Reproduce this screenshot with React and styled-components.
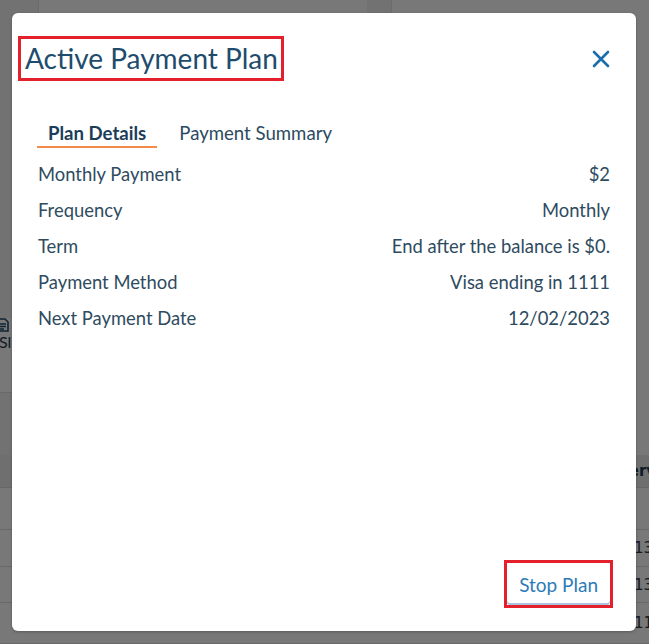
import React, { useState } from "react";
import styled, { createGlobalStyle } from "styled-components";

const rows = [
  { label: "Monthly Payment", value: "$2" },
  { label: "Frequency", value: "Monthly" },
  { label: "Term", value: "End after the balance is $0." },
  { label: "Payment Method", value: "Visa ending in 1111" },
  { label: "Next Payment Date", value: "12/02/2023" },
];

const tableRows = [
  { h: 42, text: "" },
  { h: 37, text: "13" },
  { h: 36, text: "13" },
  { h: 41, text: "11" },
];

function App() {
  const [tab, setTab] = useState("details");

  return (
    <Page>
      <GlobalStyle />
      <Backdrop>
        <TopArea>
          <SideCard>
            <CardTop />
            <InfoRow>
              <DocIcon viewBox="0 0 12 14">
                <path d="M1 1h7l3 3v9H1z M3 6h6 M3 8.5h6 M3 11h4" fill="none" stroke="#1d4d72" strokeWidth="1.6" />
              </DocIcon>
              <InfoText>Slip</InfoText>
            </InfoRow>
          </SideCard>
          <Gutter />
          <MainCard />
        </TopArea>
        <Table>
          <TableHead>
            <span />
            <span />
            <span />
            <HeadCell>Service</HeadCell>
          </TableHead>
          {tableRows.map((r, i) => (
            <TableRow key={i} $h={r.h}>
              <span />
              <span />
              <span />
              <Cell>{r.text}</Cell>
            </TableRow>
          ))}
        </Table>
      </Backdrop>

      <Overlay>
        <Modal role="dialog" aria-labelledby="plan-title">
          <Header>
            <Title id="plan-title">Active Payment Plan</Title>
            <CloseButton aria-label="Close">
              <svg width="18" height="18" viewBox="0 0 18 18">
                <path d="M2 2L16 16M16 2L2 16" stroke="#1b6ea9" strokeWidth="2.6" strokeLinecap="round" />
              </svg>
            </CloseButton>
          </Header>

          <Tabs>
            <Tab $active={tab === "details"} onClick={() => setTab("details")}>
              Plan Details
            </Tab>
            <Tab $active={tab === "summary"} onClick={() => setTab("summary")}>
              Payment Summary
            </Tab>
          </Tabs>

          <Details>
            {rows.map((r) => (
              <DetailRow key={r.label}>
                <span>{r.label}</span>
                <span>{r.value}</span>
              </DetailRow>
            ))}
          </Details>

          <Footer>
            <Highlight>
              <StopButton>Stop Plan</StopButton>
            </Highlight>
          </Footer>
        </Modal>
      </Overlay>
    </Page>
  );
}

export default App;

const GlobalStyle = createGlobalStyle`
  html, body {
    margin: 0;
    padding: 0;
    overflow: hidden;
  }
  body {
    font-family: "Lato", "Noto Sans", sans-serif;
  }
`;

const Page = styled.div`
  position: relative;
  width: 649px;
  height: 644px;
  overflow: hidden;
  background: #f2f2f2;
`;

const Backdrop = styled.div`
  display: flex;
  flex-direction: column;
  height: 100%;
`;

const TopArea = styled.div`
  display: flex;
  height: 455px;
`;

const SideCard = styled.div`
  width: 328px;
  background: #fff;
  border-left: 1px solid #e4e4e4;
  margin-left: 38px;
  display: flex;
  flex-direction: column;
  border-bottom: 1px solid #e0e0e0;
`;

const CardTop = styled.div`
  height: 318px;
`;

const InfoRow = styled.div`
  display: flex;
  flex-direction: column;
  margin-left: -40px;
  height: 74px;
  border-bottom: 1px solid #e0e0e0;
  background: #fff;
`;

const DocIcon = styled.svg`
  width: 12px;
  height: 14px;
  margin-left: -2px;
`;

const InfoText = styled.span`
  font-size: 16px;
  color: #2a3c4c;
`;

const Gutter = styled.div`
  width: 24px;
  border-right: 1px solid #e6e6e6;
`;

const MainCard = styled.div`
  flex: 1;
  background: #fff;
`;

const Table = styled.div`
  display: flex;
  flex-direction: column;
  background: #fff;
  flex: 1;
`;

const TableHead = styled.div`
  display: grid;
  grid-template-columns: 40px 288px 290px 1fr;
  height: 32px;
  align-items: center;
  background: #ececec;
  border-bottom: 1px solid #dcdcdc;
  overflow: hidden;
`;

const HeadCell = styled.span`
  font-family: "DejaVu Sans", sans-serif;
  font-weight: 700;
  font-size: 15px;
  color: #1d3d58;
  white-space: nowrap;
`;

const TableRow = styled.div`
  display: grid;
  grid-template-columns: 40px 288px 306px 1fr;
  height: ${(p) => p.$h}px;
  align-items: center;
  border-bottom: 1px solid #dedede;
  box-sizing: border-box;
  overflow: hidden;
`;

const Cell = styled.span`
  font-family: "DejaVu Sans", sans-serif;
  font-size: 15px;
  color: #2a3a48;
  white-space: nowrap;
`;

const Overlay = styled.div`
  position: absolute;
  inset: 0;
  background: rgba(0, 0, 0, 0.53);
  display: flex;
  align-items: center;
  justify-content: center;
`;

const Modal = styled.div`
  width: 624px;
  height: 618px;
  background: #fff;
  border-radius: 6px;
  box-shadow: 0 1px 3px rgba(0, 0, 0, 0.25);
  display: flex;
  flex-direction: column;
  box-sizing: border-box;
  margin-left: -1px;
`;

const Header = styled.div`
  display: flex;
  align-items: center;
  justify-content: space-between;
  padding: 23px 26px 0 6px;
`;

const Title = styled.h2`
  margin: 0;
  border: 3px solid #e3202b;
  padding: 2px 3px 2px 4px;
  font-size: 28px;
  line-height: 35px;
  font-weight: 400;
  color: #1e4c6d;
`;

const CloseButton = styled.button`
  display: flex;
  padding: 0;
  border: 0;
  background: none;
  cursor: pointer;
`;

const Tabs = styled.div`
  display: flex;
  gap: 11px;
  padding: 0 25px;
  margin-top: 40px;
`;

const Tab = styled.button`
  padding: 0 11px 1px;
  border: 0;
  border-bottom: 2px solid ${(p) => (p.$active ? "#f28a4a" : "transparent")};
  background: none;
  font-family: inherit;
  font-size: 18.6px;
  line-height: 24px;
  font-weight: ${(p) => (p.$active ? 700 : 400)};
  color: ${(p) => (p.$active ? "#1b3d58" : "#2b4a61")};
  cursor: pointer;
`;

const Details = styled.div`
  display: flex;
  flex-direction: column;
  padding: 8px 26px 0;
`;

const DetailRow = styled.div`
  display: flex;
  justify-content: space-between;
  font-size: 18.4px;
  line-height: 36px;
  color: #2e4b60;
`;

const Footer = styled.div`
  margin-top: auto;
  display: flex;
  justify-content: flex-end;
  padding: 0 23px 23px;
`;

const Highlight = styled.div`
  border: 3px solid #e3202b;
  display: flex;
`;

const StopButton = styled.button`
  height: 42px;
  padding: 0 12px;
  border: 0;
  border-radius: 3px;
  background: #fff;
  box-shadow: inset 0 -2px 0 #a9c4da;
  font-family: inherit;
  font-size: 19px;
  color: #2c7bb6;
  cursor: pointer;
`;
